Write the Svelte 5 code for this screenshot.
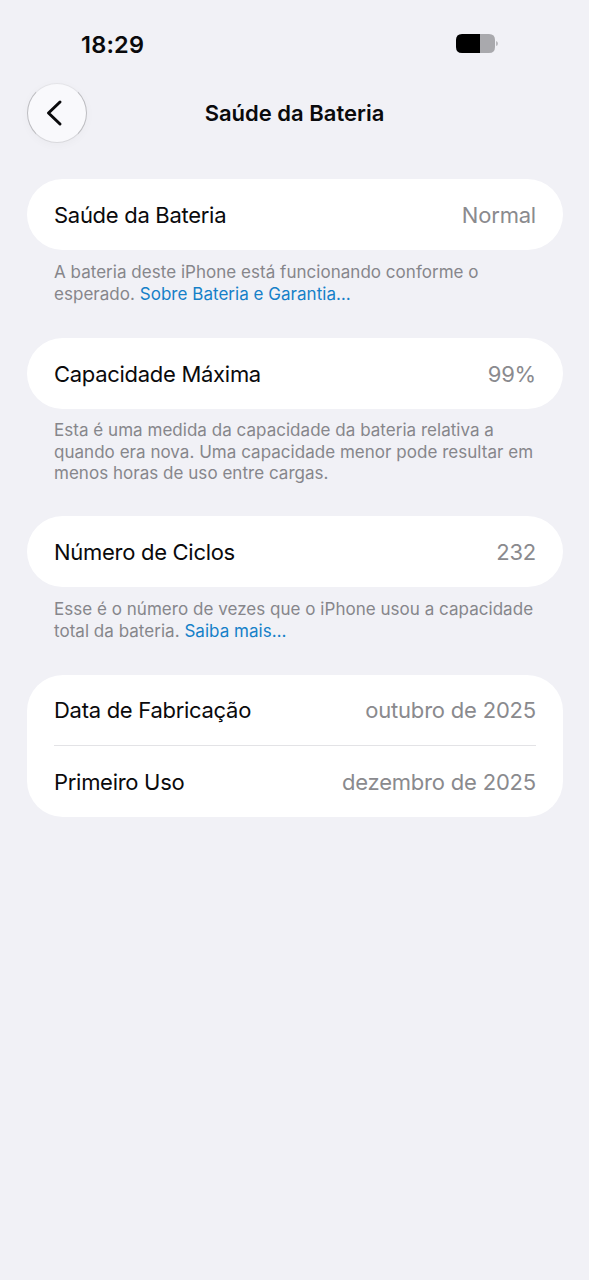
<script>
  const groups = [
    {
      rows: [{ label: "Saúde da Bateria", value: "Normal" }],
      lines: ["A bateria deste iPhone está funcionando conforme o", "esperado."],
      link: "Sobre Bateria e Garantia…",
    },
    {
      rows: [{ label: "Capacidade Máxima", value: "99%" }],
      lines: [
        "Esta é uma medida da capacidade da bateria relativa a",
        "quando era nova. Uma capacidade menor pode resultar em",
        "menos horas de uso entre cargas.",
      ],
      long: true,
    },
    {
      rows: [{ label: "Número de Ciclos", value: "232" }],
      lines: ["Esse é o número de vezes que o iPhone usou a capacidade", "total da bateria."],
      link: "Saiba mais…",
    },
    {
      rows: [
        { label: "Data de Fabricação", value: "outubro de 2025" },
        { label: "Primeiro Uso", value: "dezembro de 2025" },
      ],
    },
  ];
</script>

<style>
  :global(body) {
    background-color: #f1f1f6;
  }

  .screen {
    box-sizing: border-box;
    min-height: 1280px;
    font-family: Inter, "Liberation Sans", sans-serif;
    color: #0a0a0c;
  }

  .status {
    display: flex;
    justify-content: space-between;
    align-items: center;
    height: 83px;
    box-sizing: border-box;
    padding: 5px 91px 0 81px;
  }

  .status time {
    font-size: 23.5px;
    font-weight: 600;
    letter-spacing: 0.2px;
  }

  .status svg {
    display: block;
  }

  .header {
    display: grid;
    grid-template-columns: 60px 1fr 60px;
    align-items: center;
    height: 60px;
    padding: 0 27px;
  }

  .header h1 {
    margin: 0;
    text-align: center;
    font-size: 22px;
    font-weight: 600;
  }

  .back {
    display: flex;
    justify-content: center;
    align-items: center;
    box-sizing: border-box;
    width: 60px;
    height: 60px;
    padding: 0 6px 0 0;
    border: 1px solid;
    border-color: #e4e4e8 #bdbdc1 #d8d8dc;
    border-radius: 50%;
    background-color: #f9f9fc;
    box-shadow: 0 2px 10px rgba(0,0,0,0.03);
  }

  .groups {
    display: flex;
    flex-direction: column;
    gap: 33px;
    padding: 36px 26px 0 27px;
  }

  .card {
    border-radius: 36px;
    background-color: white;
    padding: 0 27px;
  }

  .row {
    display: flex;
    justify-content: space-between;
    align-items: center;
    height: 71px;
    font-size: 22px;
    letter-spacing: -0.29px;
  }

  .row:not(:last-child) {
    height: 70px;
  }

  .row + .row {
    border-top: 1px solid #e3e3e6;
  }

  .value {
    color: #8a8a8e;
    letter-spacing: -0.2px;
  }

  .note {
    margin: 0;
    padding: 12px 0 0 27px;
    font-size: 17px;
    line-height: 21.5px;
    letter-spacing: 0.03px;
    color: #86868b;
    white-space: nowrap;
  }

  .note--long {
    padding-top: 11px;
    margin-bottom: -1.5px;
  }

  .note a {
    color: #1580c8;
    text-decoration: none;
  }
</style>

<div class="screen">
  <div class="status">
    <time>18:29</time>
    <svg width="42" height="20" viewBox="0 0 42 20">
      <path d="M6 0H24V19H6Q0 19 0 13V6Q0 0 6 0Z" fill="#000" />
      <path d="M24 0H33Q39 0 39 6V13Q39 19 33 19H24Z" fill="#a9a9ad" />
      <path d="M40 7Q42 7.500 42 9.500T40 12Z" fill="#b9b9bd" />
    </svg>
  </div>

  <header class="header">
    <button class="back" aria-label="Voltar">
      <svg width="18" height="28" viewBox="0 0 18 28">
        <path d="M15 3L3.500 14L15 25" fill="none" stroke="#0a0a0c" stroke-width="3" stroke-linecap="round" stroke-linejoin="round" />
      </svg>
    </button>
    <h1>Saúde da Bateria</h1>
  </header>

  <main class="groups">
    {#each groups as group}
      <section>
        <div class="card">
          {#each group.rows as row}
            <div class="row">
              <span>{row.label}</span>
              <span class="value">{row.value}</span>
            </div>
          {/each}
        </div>
        {#if group.lines}
          <p class="note" class:note--long={group.long}>
            {#each group.lines as line, i}
              {#if i > 0}<br />{/if}<span>{line}</span>
            {/each}
            {#if group.link}<a href="#top">{group.link}</a>{/if}
          </p>
        {/if}
      </section>
    {/each}
  </main>
</div>
